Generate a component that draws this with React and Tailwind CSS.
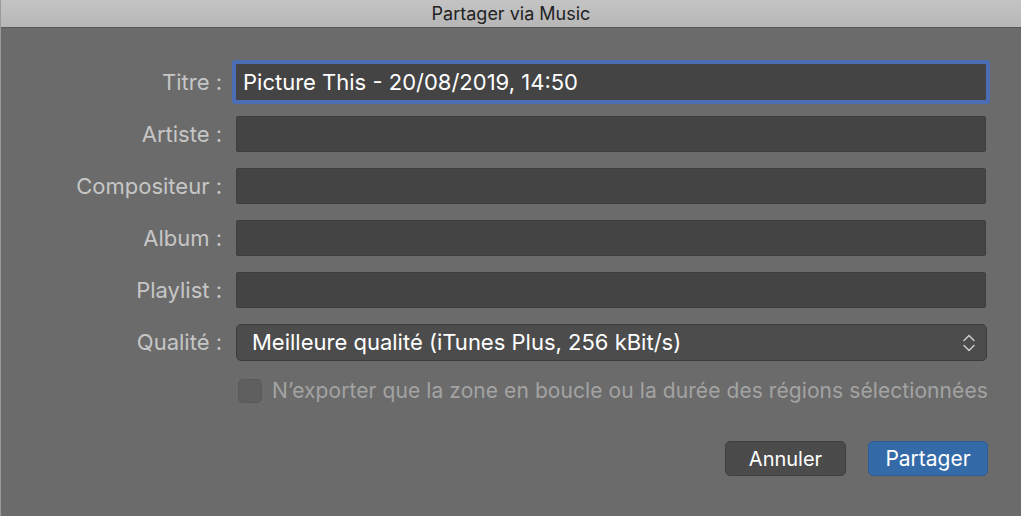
import React from 'react';

const font = { fontFamily: 'Inter, "Liberation Sans", Arial, sans-serif' };

const Field = ({ label, value, focused }) => (
  <div className="flex items-center h-[36px]">
    <div className="w-[222px] pr-[1px] text-right text-[22px] text-[#c6c6c6]">{label}</div>
    <div
      className={
        'ml-[13px] w-[750px] h-[36px] bg-[#444444] flex items-center px-[7px] text-[22px] text-white ' +
        (focused ? 'ring-[4px] ring-[#4a6db3] rounded-[1px]' : 'border border-[#3e3e3e] rounded-[2px]')
      }
    >
      {value}
    </div>
  </div>
);

export default function App() {
  return (
    <div className="w-[1021px] h-[516px] bg-[#6b6b6b] flex flex-col overflow-hidden border-l border-[#9a9a9a]" style={font}>
      {/* Title bar */}
      <div className="h-[28px] bg-gradient-to-b from-[#c4c4c4] to-[#b6b6b6] border-b border-[#5a5a5a] flex items-center justify-center text-[18px] text-[#222222]">
        Partager via Music
      </div>

      <div className="flex flex-col pt-[36px] gap-[16px]">
        <Field label="Titre :" value="Picture This - 20/08/2019, 14:50" focused />
        <Field label="Artiste :" />
        <Field label="Compositeur :" />
        <Field label="Album :" />
        <Field label="Playlist :" />

        {/* Quality popup */}
        <div className="flex items-center h-[37px]">
          <div className="w-[222px] pr-[1px] text-right text-[22px] text-[#c6c6c6]">Qualité :</div>
          <div className="ml-[13px] w-[751px] h-[37px] bg-[#4c4c4c] border border-[#3c3c3c] rounded-[5px] flex items-center justify-between pl-[15px] pr-[10px] text-[22px] text-white">
            <span>Meilleure qualité (iTunes Plus, 256 kBit/s)</span>
            <svg width="14" height="20" viewBox="0 0 14 20" fill="none" stroke="#d0d0d0" strokeWidth="1.4" strokeLinecap="round" strokeLinejoin="round">
              <path d="M2 7.5 L7 2.5 L12 7.5" />
              <path d="M2 12.5 L7 17.5 L12 12.5" />
            </svg>
          </div>
        </div>
      </div>

      {/* Checkbox */}
      <div className="flex items-center mt-[18px] ml-[237px] h-[24px]">
        <div className="w-[24px] h-[24px] rounded-[5px] bg-[#5f5f5f] border border-[#595959]" />
        <span className="ml-[10px] text-[21px] tracking-[0.08px] text-[#a3a3a3] whitespace-nowrap">
          N’exporter que la zone en boucle ou la durée des régions sélectionnées
        </span>
      </div>

      {/* Buttons */}
      <div className="flex justify-end gap-[22px] mt-[38px] pr-[33px]">
        <button className="w-[121px] h-[35px] rounded-[5px] bg-[#4b4b4b] border border-[#404040] text-[20px] text-white">
          Annuler
        </button>
        <button className="w-[120px] h-[35px] rounded-[5px] bg-[#346aa8] border border-[#2d5d95] text-[21px] text-white">
          Partager
        </button>
      </div>
    </div>
  );
}
